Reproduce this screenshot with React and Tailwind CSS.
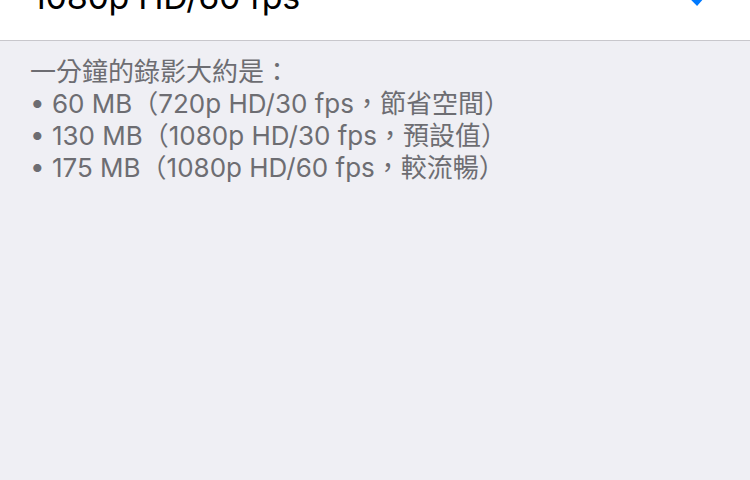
import React from 'react'

const lines = [
    "一分鐘的錄影大約是：",
    "• 60 MB（720p HD/30 fps，節省空間）",
    "• 130 MB（1080p HD/30 fps，預設值）",
    "• 175 MB（1080p HD/60 fps，較流暢）",
]

const App = () => {
    return (
        <div className="w-[750px] h-[480px] overflow-hidden bg-[#efeff4] font-['Inter','Noto_Sans_CJK_TC',sans-serif]">
            <div className="-mt-[47px] h-[88px] bg-white border-b border-[#c8c7cc] flex items-center justify-between pl-[32px] pr-[34px]">
                <span className="text-[34px] text-black tracking-[-0.3px]">1080p HD/60 fps</span>
                <svg width="30" height="26" viewBox="0 0 30 26" className="mt-[-4px]">
                    <path d="M3 13 L11 21 L27 3" fill="none" stroke="#007aff" strokeWidth="4" strokeLinecap="square" />
                </svg>
            </div>
            <div className="pt-[15px] pl-[30px] text-[26px] leading-[32px] text-[#6d6d72]">
                {lines.map((l, i) => (
                    <div key={i} className="h-[32px] whitespace-nowrap">{l}</div>
                ))}
            </div>
        </div>
    )
}

export default App
